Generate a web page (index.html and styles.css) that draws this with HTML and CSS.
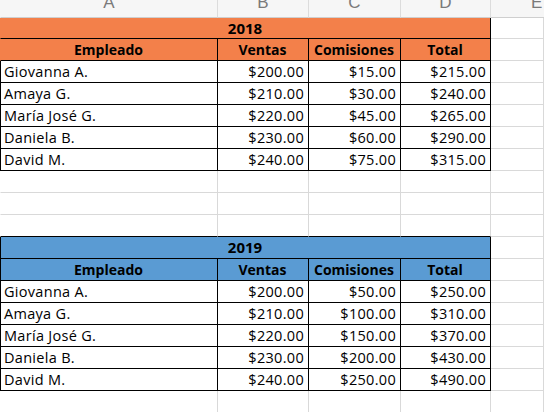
FILE: index.html
```html
<!DOCTYPE html>
<html lang="es">
<head>
<meta charset="utf-8">
<title>Comisiones</title>
<link rel="stylesheet" href="styles.css">
</head>
<body>
<div class="sheet">
  <div class="ch a">A</div><div class="ch">B</div><div class="ch">C</div><div class="ch">D</div><div class="ch e">E</div>

  <div class="c a t or hd title">2018</div><div class="c"></div>
  <div class="c a t or hd">Empleado</div><div class="c t or hd">Ventas</div><div class="c t or hd">Comisiones</div><div class="c t or hd">Total</div><div class="c"></div>
  <div class="c a t">Giovanna A.</div><div class="c t num">$200.00</div><div class="c t num">$15.00</div><div class="c t num">$215.00</div><div class="c"></div>
  <div class="c a t">Amaya G.</div><div class="c t num">$210.00</div><div class="c t num">$30.00</div><div class="c t num">$240.00</div><div class="c"></div>
  <div class="c a t">María José G.</div><div class="c t num">$220.00</div><div class="c t num">$45.00</div><div class="c t num">$265.00</div><div class="c"></div>
  <div class="c a t">Daniela B.</div><div class="c t num">$230.00</div><div class="c t num">$60.00</div><div class="c t num">$290.00</div><div class="c"></div>
  <div class="c a t">David M.</div><div class="c t num">$240.00</div><div class="c t num">$75.00</div><div class="c t num">$315.00</div><div class="c"></div>

  <div class="c a"></div><div class="c"></div><div class="c"></div><div class="c"></div><div class="c"></div>
  <div class="c a"></div><div class="c"></div><div class="c"></div><div class="c"></div><div class="c"></div>
  <div class="c a edge"></div><div class="c edge"></div><div class="c edge"></div><div class="c edge"></div><div class="c"></div>

  <div class="c a t bl hd title">2019</div><div class="c"></div>
  <div class="c a t bl hd">Empleado</div><div class="c t bl hd">Ventas</div><div class="c t bl hd">Comisiones</div><div class="c t bl hd">Total</div><div class="c"></div>
  <div class="c a t">Giovanna A.</div><div class="c t num">$200.00</div><div class="c t num">$50.00</div><div class="c t num">$250.00</div><div class="c"></div>
  <div class="c a t">Amaya G.</div><div class="c t num">$210.00</div><div class="c t num">$100.00</div><div class="c t num">$310.00</div><div class="c"></div>
  <div class="c a t">María José G.</div><div class="c t num">$220.00</div><div class="c t num">$150.00</div><div class="c t num">$370.00</div><div class="c"></div>
  <div class="c a t">Daniela B.</div><div class="c t num">$230.00</div><div class="c t num">$200.00</div><div class="c t num">$430.00</div><div class="c"></div>
  <div class="c a t sel">David M.</div><div class="c t num">$240.00</div><div class="c t num">$250.00</div><div class="c t num">$490.00</div><div class="c"></div>

  <div class="c a"></div><div class="c"></div><div class="c"></div><div class="c"></div><div class="c"></div>
</div>
</body>
</html>
```
FILE: styles.css
```css
html, body {
  margin: 0;
  padding: 0;
  background: #ffffff;
  overflow: hidden;
}

.sheet {
  display: grid;
  grid-template-columns: 218px 91px 92px 90px 53px;
  grid-template-rows: 18px 21px repeat(17, 22px);
  width: 544px;
  font-family: "Open Sans", "Noto Sans", sans-serif;
  font-size: 14.5px;
  letter-spacing: 0.3px;
  color: #000;
}

.ch {
  box-sizing: border-box;
  background: #f6f6f6;
  border-right: 1px solid #dcdcdc;
  border-bottom: 1px solid #cfcfcf;
  overflow: hidden;
  text-align: center;
  font-family: "Liberation Sans", Arial, sans-serif;
  font-size: 17px;
  letter-spacing: 0;
  line-height: 6px;
  color: #7a7a7a;
}

.ch.e {
  border-right: 0;
  text-align: left;
  padding-left: 40px;
}

.c {
  box-sizing: border-box;
  border-right: 1px solid #d9d9d9;
  border-bottom: 1px solid #d9d9d9;
  padding: 0 4px 0 3px;
  line-height: 21px;
  white-space: nowrap;
  overflow: hidden;
}

.a {
  border-left: 1px solid transparent;
}

.t {
  border-right-color: #000;
  border-bottom-color: #000;
}

.a.t {
  border-left-color: #000;
}

.edge {
  border-bottom-color: #000;
}

.or {
  background: #f3804a;
}

.a.or {
  border-left-color: #f3804a;
}

.bl {
  background: #5a9bd3;
}

.hd {
  font-weight: 700;
  font-size: 14px;
  text-align: center;
  letter-spacing: 0;
}

.title {
  grid-column: span 4;
  line-height: 20px;
  font-size: 15px;
}

.num {
  text-align: right;
}

.sel {
  border-left-color: #1f7a45;
}
```
